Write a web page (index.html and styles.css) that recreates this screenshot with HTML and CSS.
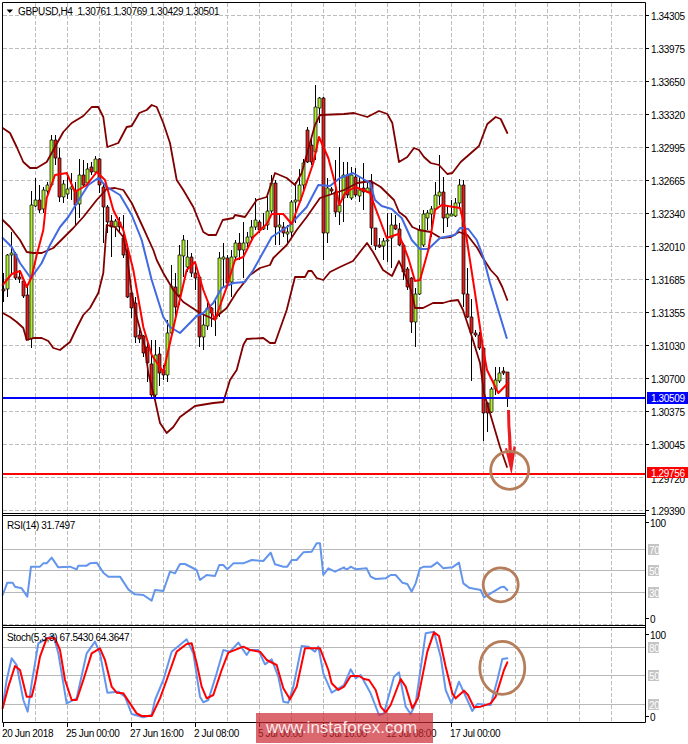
FILE: index.html
```html
<!DOCTYPE html>
<html lang="en">
<head>
<meta charset="utf-8">
<title>GBPUSD H4</title>
<link rel="stylesheet" href="styles.css">
</head>
<body>
<div class="stage">
<svg class="chart" width="688" height="744" viewBox="0 0 688 744" xmlns="http://www.w3.org/2000/svg">
  <!-- grid -->
  <path class="grid" d="M35.5 3V723M67.5 3V723M99.5 3V723M131.5 3V723M163.5 3V723M195.5 3V723M227.5 3V723M259.5 3V723M291.5 3V723M323.5 3V723M355.5 3V723M387.5 3V723M419.5 3V723M451.5 3V723M483.5 3V723M515.5 3V723M547.5 3V723M579.5 3V723M611.5 3V723"/>
  <path class="grid" d="M3 15.5H645M3 48.5H645M3 81.5H645M3 114.5H645M3 147.5H645M3 180.5H645M3 213.5H645M3 246.5H645M3 279.5H645M3 312.5H645M3 345.5H645M3 378.5H645M3 411.5H645M3 444.5H645M3 477.5H645M3 510.5H645M3 624.5H645M3 722.5H645"/>
  <path class="level" d="M3 549.5H645M3 570.5H645M3 592.5H645M3 647.5H645M3 675.5H645M3 704.5H645"/>

  <!-- candles -->
  <path class="wick" d="M3.5 273V302M7.5 254V297M11.5 232V275M15.5 252V280M19.5 270V283M23.5 278V298M27.5 286V340M31.5 191V348M35.5 178V207M39.5 185V213M43.5 187V213M47.5 182V197M51.5 135V187M55.5 135V165M59.5 148V202M63.5 180V203M67.5 173V199M71.5 173V200M75.5 182V225M79.5 159V218M83.5 160V187M87.5 163V185M91.5 162V175M95.5 156V175M99.5 158V193M103.5 183V243M107.5 205V233M111.5 215V257M115.5 219V237M119.5 217V233M123.5 215V258M127.5 245V298M131.5 290V318M135.5 297V343M139.5 330V343M143.5 335V357M147.5 340V382M151.5 340V397M155.5 340V397M159.5 347V386M163.5 365V380M167.5 320V382M171.5 265V335M175.5 273V320M179.5 245V305M183.5 235V277M187.5 240V272M191.5 253V277M195.5 262V290M199.5 277V347M203.5 313V350M207.5 303V330M211.5 307V327M215.5 300V336M219.5 252V317M223.5 243V287M227.5 255V287M231.5 250V297M235.5 240V260M239.5 233V260M243.5 222V278M247.5 232V250M251.5 220V240M255.5 198V230M259.5 220V233M263.5 213V230M267.5 193V230M271.5 175V213M275.5 180V245M279.5 213V245M283.5 222V237M287.5 225V243M291.5 200V237M295.5 182V223M299.5 169V203M303.5 159V190M307.5 127V163M311.5 137V165M315.5 85V160M319.5 97V123M323.5 97V260M327.5 178V243M331.5 187V195M335.5 160V217M339.5 147V225M343.5 162V222M347.5 162V198M351.5 167V200M355.5 168V197M359.5 177V202M363.5 163V210M367.5 182V193M371.5 174V245M375.5 228V250M379.5 238V248M383.5 238V260M387.5 213V262M391.5 213V268M395.5 215V230M399.5 223V246M403.5 243V280M407.5 267V290M411.5 277V333M415.5 288V347M419.5 225V295M423.5 210V247M427.5 210V230M431.5 206V237M435.5 182V210M439.5 155V205M443.5 177V233M447.5 205V227M451.5 200V216M455.5 198V217M459.5 179V208M463.5 180V307M467.5 268V318M471.5 299V381M475.5 330V337M479.5 332V350M483.5 347V441M487.5 402V432M491.5 387V413M495.5 367V395M499.5 367V383M503.5 367V375M507.5 372V407"/>
  <path class="bull" d="M6 255h3V289h-3zM10 253h3V255h-3zM30 205h3V339h-3zM34 200h3V206h-3zM42 190h3V209h-3zM46 185h3V191h-3zM50 140h3V185h-3zM62 184h3V197h-3zM66 189h3V194h-3zM70 187h3V189h-3zM78 175h3V204h-3zM86 169h3V183h-3zM94 159h3V172h-3zM114 221h3V227h-3zM154 355h3V395h-3zM166 333h3V375h-3zM170 286h3V333h-3zM178 255h3V295h-3zM182 240h3V256h-3zM186 257h3V267h-3zM202 325h3V337h-3zM206 308h3V326h-3zM214 317h3V319h-3zM218 258h3V313h-3zM222 257h3V259h-3zM230 257h3V282h-3zM234 243h3V257h-3zM242 243h3V250h-3zM246 237h3V243h-3zM250 227h3V237h-3zM254 220h3V227h-3zM262 227h3V229h-3zM266 211h3V225h-3zM270 183h3V211h-3zM278 225h3V227h-3zM286 232h3V234h-3zM290 202h3V232h-3zM294 200h3V202h-3zM298 185h3V201h-3zM302 163h3V185h-3zM314 107h3V152h-3zM318 98h3V108h-3zM326 188h3V233h-3zM338 205h3V212h-3zM342 175h3V198h-3zM350 175h3V198h-3zM358 190h3V196h-3zM366 188h3V192h-3zM382 241h3V246h-3zM386 240h3V241h-3zM390 225h3V238h-3zM414 294h3V322h-3zM418 230h3V294h-3zM422 214h3V245h-3zM426 213h3V218h-3zM430 209h3V214h-3zM434 195h3V209h-3zM438 192h3V196h-3zM446 214h3V218h-3zM450 214h3V216h-3zM454 203h3V216h-3zM458 185h3V203h-3zM490 389h3V412h-3zM494 380h3V389h-3zM498 373h3V381h-3z"/>
  <path class="bear" d="M2 289h3V291h-3zM14 254h3V278h-3zM18 277h3V279h-3zM22 281h3V296h-3zM26 295h3V340h-3zM38 200h3V210h-3zM54 140h3V158h-3zM58 158h3V197h-3zM74 190h3V205h-3zM82 175h3V185h-3zM90 167h3V172h-3zM98 159h3V185h-3zM102 187h3V207h-3zM106 207h3V222h-3zM110 221h3V227h-3zM118 222h3V227h-3zM122 238h3V255h-3zM126 254h3V297h-3zM130 293h3V308h-3zM134 303h3V337h-3zM138 335h3V339h-3zM142 336h3V353h-3zM146 347h3V363h-3zM150 364h3V395h-3zM158 354h3V373h-3zM162 370h3V375h-3zM174 287h3V307h-3zM190 257h3V273h-3zM194 273h3V278h-3zM198 277h3V337h-3zM210 308h3V313h-3zM226 258h3V283h-3zM238 243h3V250h-3zM258 222h3V230h-3zM274 183h3V227h-3zM282 227h3V233h-3zM306 130h3V162h-3zM310 145h3V162h-3zM322 98h3V233h-3zM330 189h3V191h-3zM334 192h3V212h-3zM346 175h3V195h-3zM354 177h3V195h-3zM362 188h3V192h-3zM370 183h3V228h-3zM374 228h3V246h-3zM378 245h3V247h-3zM394 225h3V229h-3zM398 229h3V245h-3zM402 245h3V272h-3zM406 269h3V287h-3zM410 278h3V322h-3zM442 192h3V218h-3zM462 185h3V294h-3zM466 294h3V317h-3zM470 317h3V333h-3zM474 333h3V335h-3zM478 335h3V348h-3zM482 348h3V413h-3zM486 403h3V413h-3zM502 371h3V373h-3zM506 372h3V398h-3z"/>

  <!-- Bollinger bands -->
  <polyline class="bb" points="2.7,128 10,133 16.7,147 23.3,162 30,168 36.7,168 46.7,162 55,147 63.3,132 71.7,123 83.3,116 91.7,107 98.3,107 103.3,117 107.3,147 118.3,143 126.7,127 131.7,126 139.3,113 146.7,110 151.7,105 156.7,107 163.3,123 170,143 176.7,180 183.3,190 193.3,207 203.3,232 208.3,235 216,235 222.7,220 233.3,218 235,215 245,217 256.7,200 266.7,197 275,173 286.7,178 295,185 301.7,173 308,150 315,125 320,115 344,114 354,113 367.3,117 379,111 387.3,114 392.3,123 399,162 407.3,157 414,148 419,150 424,157 430.7,163 439,165 447.3,174 452.3,173 460.7,162 479,146 487.3,124 495.7,117 500.7,119 507.3,133"/>
  <polyline class="bb" points="2.7,220 10,227 20,240 26.7,252 33.3,253 41.7,253 53.3,248 63.3,238 73.3,228 83.3,217 96.7,200 106.7,189 115,188 123.3,190 131.7,203 143.3,228 153.3,250 156.7,260 163.3,273 173.3,290 183.3,302 200,313 213.3,319 218.3,315 226.7,308 236.7,292 250,275 260,268 270,265 273.3,258 286.7,245 296.7,230 306.7,217 320,198 344,190 357.3,183 370.7,181 380.7,187 394,200 399,212 405.7,217 412.3,227 419,230 430.7,232 440.7,238 450.7,237 459,232 467.3,235 477.3,248 482.3,257 490.7,270 497.3,277 502.3,287 507.3,300"/>
  <polyline class="bb" points="2.7,313 10,317 16.7,322 23.3,328 26.7,340 33.3,338 41.7,338 48.3,341 53.3,348 60,350 70,342 76.7,328 83.3,315 90,308 98.3,293 103.3,273 106.7,225 115,227 123.3,237 126.7,253 131.7,293 136.7,317 145,347 148.3,373 155,400 160,423 166.7,433 173.3,427 180,417 195,406 213.3,403 223.3,402 230,380 236.7,370 243.3,345 246.7,339 263.3,338 270,343 275,343 286.7,310 295,277 305,277 308.3,271 311.7,271 316.7,278 323.3,280 330,272 340,267 353,261 367,243 373,252 383,270 392,276 399,261 403,270 412,293 415,308 423,308 433,303 443,303 450,301 458,300 463,310 472,337 480,363 484,393 492,420 500,447 507,467"/>

  <!-- moving averages -->
  <polyline class="ma-blue" points="2.7,238 11.7,247 20,263 30,277 33.3,275 41.7,263 50,245 60,227 68.3,217 80,198 88.3,185 98.3,178 106.7,187 120,195 131.7,215 141.7,240 151.7,280 163.3,317 170,327 180,333 196.7,316 203.3,313 213.3,303 221.7,288 233.3,283 245,282 253.3,270 271.7,237 290,225 306.7,207 318.3,185 330,186 340,178 353,173 370,183 375,200 381.7,206 391.7,209 401.7,218 411.7,240 420,249 428.3,249 440,238 455,235 460,228 468.3,229 476.7,240 483.3,257 490,283 506.7,338"/>
  <polyline class="ma-red" points="2.7,285 11.7,274 20,271 26.7,287 31.7,277 36.7,255 43.3,230 46.7,198 55,175 66.7,173 75,192 86.7,185 96.7,172 105,180 113.3,210 123.3,230 133.3,270 143.3,327 151.7,355 163.3,372 170,343 176.7,313 186.7,270 195,262 203.3,290 215,320 226.7,287 235,260 243.3,257 253.3,237 266.7,224 271.7,214 283.3,214 291.7,224 301.7,197 313.3,163 319,137 328.3,158 335,183 339.3,205 345,193 355,187 363.3,190 370,193 375,207 386.7,238 398.3,234 403.3,245 408.3,258 415,281 420,280 428.3,250 435,210 441.7,205 460,208 465,228 475,293 483.3,350 487,370 498.3,393 508.3,383"/>

  <!-- horizontal price lines -->
  <rect class="blue-fill" x="3" y="397" width="642" height="2"/>
  <rect class="red-fill" x="3" y="473" width="642" height="2"/>

  <!-- arrow -->
  <path class="arrow" d="M507 410h3l.4 16 .8 10 .8 18 1.6-8 2.2 1L511.5 475 505 448.5l2-.5 1.6 6L508 436l-.6-10z"/>
  <ellipse class="mark" cx="509.7" cy="470.3" rx="19" ry="19"/>

  <!-- RSI -->
  <g transform="translate(0 510) scale(.33333)">
    <polyline class="rsi" points="8,255 22,218 38,218 45,230 65,235 82,260 93,170 120,170 130,160 140,160 155,143 175,172 210,170 230,178 235,167 260,167 270,160 290,158 310,188 325,200 360,200 385,238 405,253 430,255 455,272 465,240 490,243 510,185 525,190 540,162 555,162 590,180 600,210 620,195 645,198 658,165 670,165 682,178 700,160 730,160 755,150 790,153 812,128 825,163 850,170 862,170 875,150 890,150 910,127 935,125 950,100 960,100 970,195 985,175 1005,185 1032,172"/>
    <polyline class="rsi" points="1032,175 1042,178 1052,170 1067,178 1100,175 1112,200 1127,207 1157,205 1172,195 1187,195 1207,218 1222,222 1235,245 1247,220 1260,175 1272,170 1294,170 1312,157 1330,175 1357,172 1377,158 1390,220 1407,233 1442,240 1452,262 1472,250 1502,232 1512,230 1522,240"/>
    <polyline class="rsi" points="8,590 20,510 35,445 50,465 70,570 83,605 95,520 115,400 130,392 160,375 175,430 200,580 230,565 260,430 285,395 300,430 322,548 355,545 375,560 395,612 430,622 455,615 465,570 490,510 515,425 560,388 580,430 600,560 610,577 625,570 650,490 670,420 690,425 715,398 740,435 750,420 775,420 795,463 815,448 835,500 850,575 865,578 880,530 905,408 925,410 945,425 955,410 970,490 995,548 1032,525 1052,478 1067,505 1082,495 1112,550 1137,615 1152,610 1182,500 1197,487 1217,590 1232,612 1247,580 1277,370 1302,365 1322,440 1337,540 1354,580 1377,515 1417,603 1432,582 1472,585 1492,510 1507,447 1522,445"/>
    <polyline class="stoch-red" points="8,595 25,530 45,468 60,480 80,560 95,560 105,520 120,440 140,385 165,385 180,420 195,510 215,570 230,570 250,510 275,430 300,415 315,450 335,530 350,548 370,550 390,580 410,610 425,618 455,618 480,565 500,510 530,425 560,402 575,400 590,460 605,530 620,565 640,555 665,480 685,428 730,410 750,420 780,425 800,450 830,465 850,535 870,568 890,530 915,415 960,415 985,480 995,520 1015,540 1032,530 1052,498 1077,498 1092,507 1107,510 1127,540 1142,590 1157,607 1172,585 1202,507 1217,530 1237,595 1254,565 1282,425 1302,367 1317,378 1337,470 1357,550 1367,565 1392,542 1404,555 1422,592 1442,590 1472,580 1487,560 1512,480 1522,457"/>
  </g>
  <ellipse class="mark" cx="500.7" cy="584.8" rx="17.5" ry="17"/>
  <ellipse class="mark" cx="502.3" cy="667.8" rx="22.5" ry="26.5"/>

  <!-- frames -->
  <path class="frame" d="M2.5 2.5H645.5V722.5H2.5ZM2.5 513.5H645.5M2.5 515.5H645.5M2.5 625.5H645.5M2.5 627.5H645.5"/>
  <path class="frame" d="M645 15.5h4M645 48.5h4M645 81.5h4M645 114.5h4M645 147.5h4M645 180.5h4M645 213.5h4M645 246.5h4M645 279.5h4M645 312.5h4M645 345.5h4M645 378.5h4M645 411.5h4M645 444.5h4M645 510.5h4M645 522.5h4M645 618.5h4M645 634.5h4M645 716.5h4M3.5 723v4M67.5 723v4M131.5 723v4M195.5 723v4M259.5 723v4M323.5 723v4M387.5 723v4M451.5 723v4"/>

  <!-- legends -->
  <path class="tri" d="M6.5 9.5h6.5l-3.2 3.6z"/>
  <text class="label" x="18" y="14.5">GBPUSD,H4  1.30761 1.30769 1.30429 1.30501</text>
  <text class="label" x="7" y="528.5">RSI(14) 31.7497</text>
  <text class="label" x="7" y="640.5">Stoch(5,3,3) 67.5430 64.3647</text>

  <!-- price axis -->
  <g class="axis">
    <text class="label" x="651" y="19.5">1.34305</text>
    <text class="label" x="651" y="52.5">1.33975</text>
    <text class="label" x="651" y="85.5">1.33650</text>
    <text class="label" x="651" y="118.5">1.33320</text>
    <text class="label" x="651" y="151.5">1.32995</text>
    <text class="label" x="651" y="184.5">1.32665</text>
    <text class="label" x="651" y="217.5">1.32340</text>
    <text class="label" x="651" y="250.5">1.32010</text>
    <text class="label" x="651" y="283.5">1.31685</text>
    <text class="label" x="651" y="316.5">1.31355</text>
    <text class="label" x="651" y="349.5">1.31030</text>
    <text class="label" x="651" y="382.5">1.30700</text>
    <text class="label" x="651" y="415.5">1.30375</text>
    <text class="label" x="651" y="448.5">1.30045</text>
    <text class="label" x="651" y="482.5">1.29720</text>
    <text class="label" x="651" y="514.5">1.29390</text>
  </g>
  <rect class="blue-fill" x="647" y="392" width="41" height="12"/>
  <text class="label inverse" x="651" y="402">1.30509</text>
  <rect class="red-fill" x="647" y="467" width="41" height="11"/>
  <text class="label inverse" x="651" y="477">1.29756</text>

  <!-- oscillator scales -->
  <text class="label" x="650" y="526.5">100</text>
  <rect class="scale-box" x="648" y="544" width="11" height="11"/><text class="label inverse" x="649" y="553.5">70</text>
  <rect class="scale-box" x="648" y="565" width="11" height="11"/><text class="label inverse" x="649" y="574.5">50</text>
  <rect class="scale-box" x="648" y="587" width="11" height="11"/><text class="label inverse" x="649" y="596.5">30</text>
  <text class="label" x="650" y="622.5">0</text>
  <text class="label" x="650" y="638.5">100</text>
  <rect class="scale-box" x="648" y="642" width="11" height="11"/><text class="label inverse" x="649" y="651.5">80</text>
  <rect class="scale-box" x="648" y="670" width="11" height="11"/><text class="label inverse" x="649" y="679.5">50</text>
  <rect class="scale-box" x="648" y="699" width="11" height="11"/><text class="label inverse" x="649" y="708.5">20</text>
  <text class="label" x="650" y="720.5">0</text>

  <!-- time axis -->
  <text class="label" x="2" y="736.5">20 Jun 2018</text>
  <text class="label" x="66" y="736.5">25 Jun 00:00</text>
  <text class="label" x="130" y="736.5">27 Jun 16:00</text>
  <text class="label" x="194" y="736.5">2 Jul 08:00</text>
  <text class="label" x="258" y="736.5">5 Jul 00:00</text>
  <text class="label" x="322" y="736.5">9 Jul 16:00</text>
  <text class="label" x="386" y="736.5">12 Jul 08:00</text>
  <text class="label" x="450" y="736.5">17 Jul 00:00</text>
</svg>
<div class="watermark">www.instaforex.com</div>
</div>
</body>
</html>
```

FILE: styles.css
```css
html, body {
  margin: 0;
  background: #fff;
}
.stage {
  position: relative;
  width: 688px;
  height: 744px;
  overflow: hidden;
}
.chart {
  display: block;
}
.grid {
  fill: none;
  stroke: #bdbdbd;
  stroke-width: 1;
  stroke-dasharray: 4 2;
}
.level {
  fill: none;
  stroke: #b8b8b8;
  stroke-width: 1;
}
.wick {
  fill: none;
  stroke: #000;
  stroke-width: 1;
}
.bull {
  fill: #aef02c;
  stroke: #000;
  stroke-width: .7;
}
.bear {
  fill: #e01f1c;
  stroke: #000;
  stroke-width: .7;
}
.bb, .ma-blue, .ma-red, .rsi, .stoch-red {
  fill: none;
  stroke-linejoin: round;
  stroke-linecap: round;
}
.bb {
  stroke: #800000;
  stroke-width: 1.8;
}
.ma-blue {
  stroke: #4169e1;
  stroke-width: 2;
}
.ma-red {
  stroke: #ff0000;
  stroke-width: 2;
}
.rsi {
  stroke: #6495ed;
  stroke-width: 2;
  vector-effect: non-scaling-stroke;
}
.stoch-red {
  stroke: #ff0000;
  stroke-width: 2;
  vector-effect: non-scaling-stroke;
}
.blue-fill {
  fill: #0000ff;
}
.red-fill {
  fill: #ff0000;
}
.arrow {
  fill: #ed1c24;
}
.mark {
  fill: none;
  stroke: #b57d5a;
  stroke-width: 2.8;
}
.frame {
  fill: none;
  stroke: #000;
  stroke-width: 1;
}
.tri {
  fill: #000;
}
.label {
  font-family: "Liberation Sans", Arial, sans-serif;
  font-size: 10px;
  letter-spacing: -.36px;
  fill: #000;
  white-space: pre;
}
.inverse {
  fill: #fff;
}
.scale-box {
  fill: #c4c4c4;
}
.watermark {
  position: absolute;
  left: 256px;
  top: 713px;
  width: 177px;
  height: 30px;
  box-sizing: border-box;
  padding-left: 10px;
  background: rgba(205, 40, 50, .7);
  color: rgba(255, 255, 255, .88);
  font-family: "Liberation Sans", Arial, sans-serif;
  font-size: 17px;
  line-height: 29px;
  white-space: nowrap;
}
```
